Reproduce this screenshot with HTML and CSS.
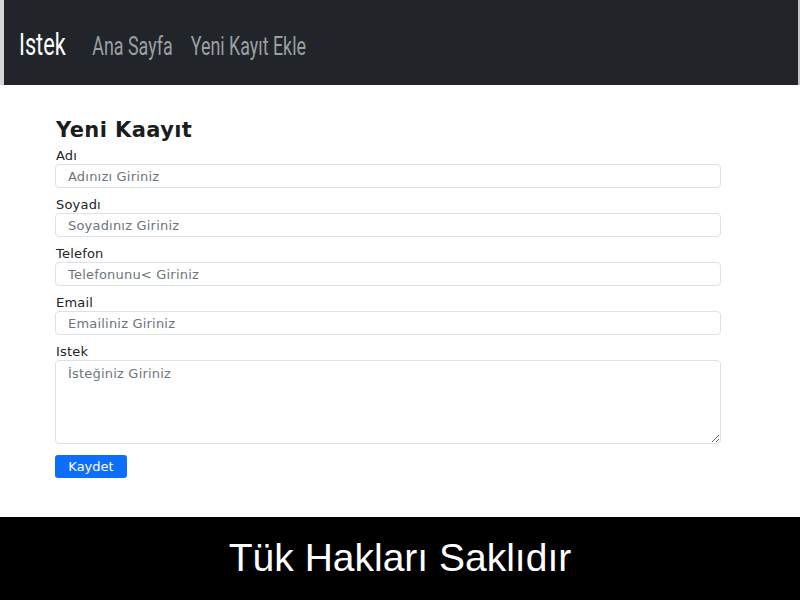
FILE: index.html
```html
<!DOCTYPE html>
<html lang="tr">
<head>
<meta charset="utf-8">
<title>Istek</title>
<link rel="stylesheet" href="styles.css">
</head>
<body>
<div class="page">
  <header class="navbar">
    <nav class="nav">
      <a class="brand" href="#">Istek</a>
      <a class="nav-link" href="#">Ana Sayfa</a>
      <a class="nav-link" href="#">Yeni Kayıt Ekle</a>
    </nav>
  </header>
  <main class="main">
    <form class="form">
      <h2 class="title">Yeni Kaayıt</h2>
      <div class="group">
        <label class="label">Adı</label>
        <input class="control" type="text" placeholder="Adınızı Giriniz">
      </div>
      <div class="group">
        <label class="label">Soyadı</label>
        <input class="control" type="text" placeholder="Soyadınız Giriniz">
      </div>
      <div class="group">
        <label class="label">Telefon</label>
        <input class="control" type="text" placeholder="Telefonunu&lt; Giriniz">
      </div>
      <div class="group">
        <label class="label">Email</label>
        <input class="control" type="text" placeholder="Emailiniz Giriniz">
      </div>
      <div class="group">
        <label class="label">Istek</label>
        <textarea class="control area" placeholder="İsteğiniz Giriniz"></textarea>
      </div>
      <button class="btn" type="button">Kaydet</button>
    </form>
  </main>
  <footer class="footer">Tük Hakları Saklıdır</footer>
</div>
</body>
</html>
```

FILE: styles.css
```css
* { box-sizing: border-box; }
html, body { margin: 0; padding: 0; background: #fff; }
body { font-family: "DejaVu Sans", sans-serif; color: #212529; }

.page {
  height: 600px;
  display: flex;
  flex-direction: column;
}

.navbar {
  height: 85px;
  flex: none;
  background: #212529;
  border-left: 4px solid #d6d6d6;
  border-right: 2px solid #c4c4c4;
  display: flex;
  align-items: center;
  padding-left: 15px;
  padding-top: 3px;
}

.nav {
  display: flex;
  align-items: baseline;
  font-family: Roboto, "Liberation Sans", sans-serif;
  transform: scaleX(0.7);
  transform-origin: left center;
  white-space: nowrap;
}

.brand {
  color: #fff;
  font-size: 31px;
  text-decoration: none;
  margin-right: 38px;
}

.nav-link {
  color: #9c9fa3;
  font-size: 25.5px;
  text-decoration: none;
  margin-right: 26px;
}

.main {
  flex: 1;
}

.form {
  width: 666px;
  margin: 33px 0 0 55px;
}

.title {
  margin: 0 0 6px 1px;
  font-size: 21px;
  line-height: 24px;
  font-weight: 600;
  letter-spacing: 0.4px;
  color: #1a1d20;
}

.group {
  margin-bottom: 9px;
}

.label {
  display: block;
  font-size: 13px;
  line-height: 16px;
  color: #212529;
  padding-left: 1px;
  letter-spacing: 0.2px;
}

.control {
  display: block;
  width: 100%;
  height: 24px;
  padding: 0 12px;
  font-family: "DejaVu Sans", sans-serif;
  font-size: 13px;
  letter-spacing: 0.2px;
  color: #212529;
  background: #fff;
  border: 1px solid #dee2e6;
  border-radius: 4px;
  outline: none;
}

.control::placeholder { color: #6c757d; }

.area {
  height: 84px;
  padding-top: 5px;
  resize: vertical;
}

.group:last-of-type { margin-bottom: 11px; }

.btn {
  display: block;
  width: 72px;
  height: 23px;
  padding: 0;
  background: #0d6efd;
  color: #fff;
  border: none;
  border-radius: 3px;
  font-family: "DejaVu Sans", sans-serif;
  font-size: 13px;
}

.footer {
  height: 83px;
  flex: none;
  background: #000;
  color: #fff;
  font-family: "Liberation Sans", Arial, sans-serif;
  font-size: 39px;
  display: flex;
  align-items: center;
  justify-content: center;
  padding-bottom: 2px;
}
```
